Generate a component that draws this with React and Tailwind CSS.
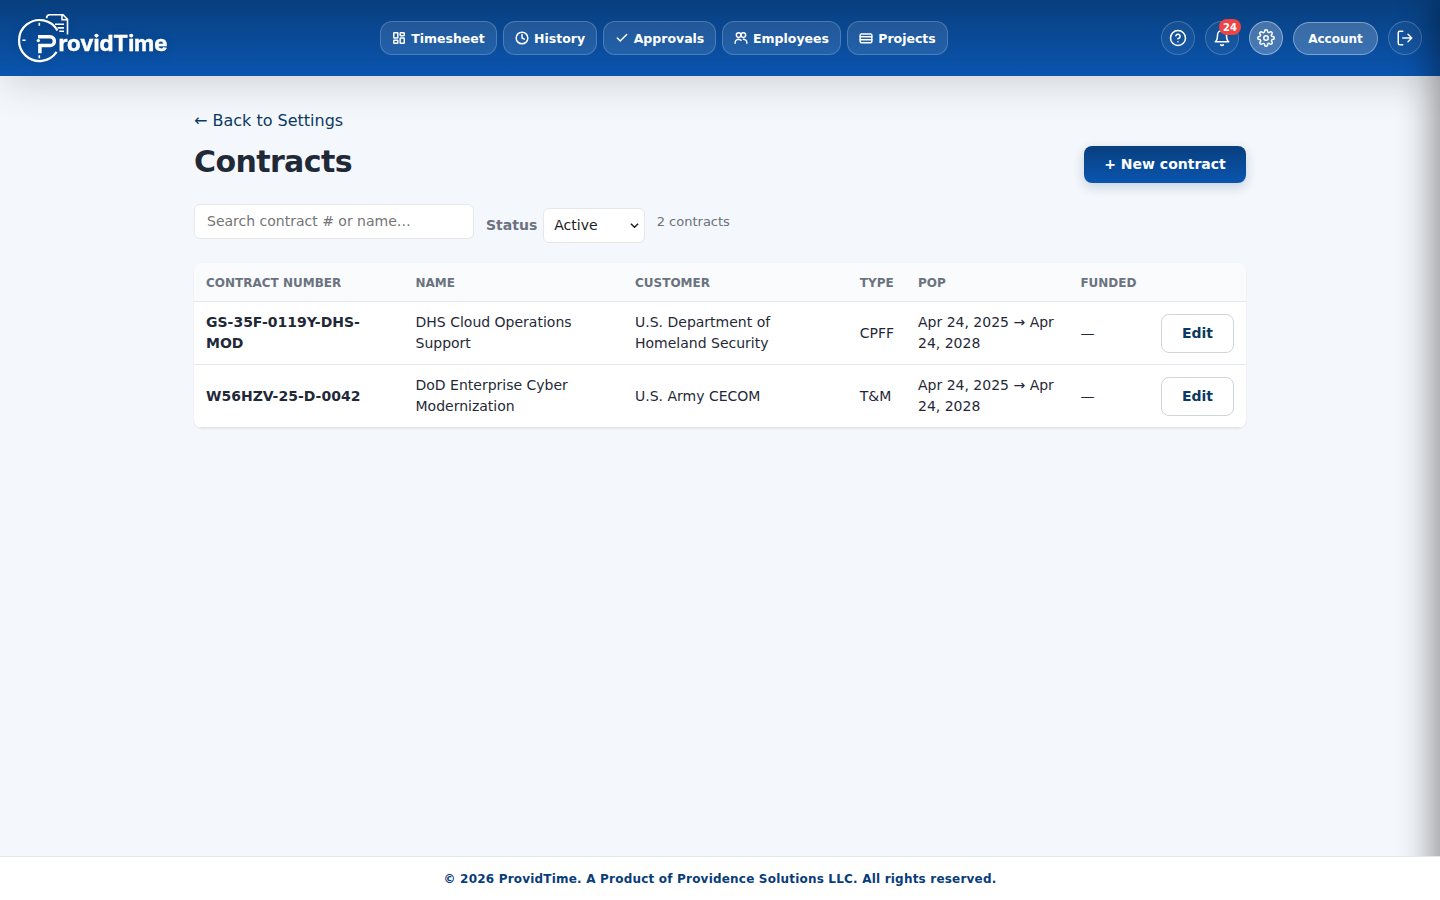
import React from "react";

const stroke = {
  fill: "none",
  stroke: "currentColor",
  strokeLinecap: "round",
  strokeLinejoin: "round",
  viewBox: "0 0 24 24",
};

const icons = {
  grid: (
    <>
      <rect x="3" y="3" width="7" height="9" rx="1" />
      <rect x="14" y="3" width="7" height="5" rx="1" />
      <rect x="14" y="12" width="7" height="9" rx="1" />
      <rect x="3" y="16" width="7" height="5" rx="1" />
    </>
  ),
  clock: (
    <>
      <circle cx="12" cy="12" r="10" />
      <path d="M12 6v6l4 2" />
    </>
  ),
  check: <path d="M20 6 9 17l-5-5" />,
  users: (
    <>
      <circle cx="8" cy="7" r="4" />
      <circle cx="16" cy="7" r="4" />
      <path d="M2 21v-1a6 6 0 0 1 6-6 6 6 0 0 1 4 2M16 14a6 6 0 0 1 6 6v1" />
    </>
  ),
  card: (
    <>
      <rect x="2" y="5" width="20" height="15" rx="2" />
      <path d="M2 10h20M2 15h20" />
    </>
  ),
  help: (
    <>
      <circle cx="12" cy="12" r="10" />
      <path d="M9.09 9a3 3 0 0 1 5.83 1c0 2-3 3-3 3M12 17h.01" />
    </>
  ),
  bell: <path d="M18 8A6 6 0 0 0 6 8c0 7-3 9-3 9h18s-3-2-3-9M13.73 21a2 2 0 0 1-3.46 0" />,
  gear: (
    <>
      <circle cx="12" cy="12" r="3" />
      <path d="M19.4 15a1.65 1.65 0 0 0 .33 1.82l.06.06a2 2 0 1 1-2.83 2.83l-.06-.06a1.65 1.65 0 0 0-2.8 1.18V21a2 2 0 0 1-4 0v-.09A1.65 1.65 0 0 0 9 19.4a1.65 1.65 0 0 0-1.82.33l-.06.06a2 2 0 1 1-2.83-2.83l.06-.06A1.65 1.65 0 0 0 3.09 14H3a2 2 0 0 1 0-4h.09A1.65 1.65 0 0 0 4.6 9a1.65 1.65 0 0 0-.33-1.82l-.06-.06a2 2 0 1 1 2.83-2.83l.06.06A1.65 1.65 0 0 0 10 3.09V3a2 2 0 0 1 4 0v.09a1.65 1.65 0 0 0 2.82 1.18l.06-.06a2 2 0 1 1 2.83 2.83l-.06.06A1.65 1.65 0 0 0 20.91 10H21a2 2 0 0 1 0 4h-.09a1.65 1.65 0 0 0-1.51 1z" />
    </>
  ),
  logout: <path d="M9 21H5a2 2 0 0 1-2-2V5a2 2 0 0 1 2-2h4M16 17l5-5-5-5M21 12H9" />,
};

function Icon({ name, className, weight = 2 }) {
  return (
    <svg {...stroke} strokeWidth={weight} className={className}>
      {icons[name]}
    </svg>
  );
}

const nav = [
  ["grid", "Timesheet", "w-[117px]"],
  ["clock", "History", "w-[94px]"],
  ["check", "Approvals", "w-[113px]"],
  ["users", "Employees", "w-[119px]"],
  ["card", "Projects", "w-[101px]"],
];

const contracts = [
  ["GS-35F-0119Y-DHS-MOD", "DHS Cloud Operations Support", "U.S. Department of Homeland Security", "CPFF"],
  ["W56HZV-25-D-0042", "DoD Enterprise Cyber Modernization", "U.S. Army CECOM", "T&M"],
];

function Logo() {
  return (
    <svg width="152" height="52" viewBox="0 0 152 52" fill="none" stroke="white" className="drop-shadow-[0_2px_4px_rgba(0,0,0,0.15)]">
      <path d="M40.4 18.5A20.5 20.5 0 1 0 39.6 39.9" strokeWidth="2.2" />
      <path d="M22.3 10.7v3M22.3 43.2v3M5.3 28.3h3.3" strokeWidth="1.6" />
      <path d="M29.6 6.2q0-3.4 3-3.4h13.4l4.5 4.6v15.2M45 3v4.8h5M38 12.3h9M40.5 15.9h6.5M42.3 19.3H47" strokeWidth="1.6" />
      <path d="M21 24.8h12a4.3 4.3 0 0 1 0 8.7H22.9v7.8" strokeWidth="3.5" />
      <circle cx="21.3" cy="28.6" r="1.7" fill="white" stroke="none" />
      <text x="41.5" y="39" textLength="109" lengthAdjust="spacingAndGlyphs" strokeWidth="0.4" className="fill-white font-['Inter',sans-serif] text-[21.3px] font-bold">rovidTime</text>
    </svg>
  );
}

export default function App() {
  const round = "flex size-[34px] items-center justify-center rounded-full border";
  return (
    <div className="relative flex h-[900px] flex-col overflow-hidden bg-[#f4f7fb] font-['DejaVu_Sans',sans-serif] text-[#1f2937]">
      <header className="relative flex h-[76px] shrink-0 items-center bg-linear-to-b from-[#083f7e] to-[#0a55b0] pl-[17px] pr-[18px] text-white shadow-[0_10px_40px_-4px_rgba(0,0,0,0.16)]">
        <div className="w-[363px]"><Logo /></div>
        <nav className="flex gap-1.5">
          {nav.map(([icon, label, width]) => (
            <a key={label} className={`flex h-[34px] items-center justify-center gap-[5px] rounded-xl border border-white/20 bg-white/10 text-[12.5px] font-bold ${width}`}>
              <Icon name={icon} weight={2.5} className="size-3.5 shrink-0" />
              <span className="pt-0.5">{label}</span>
            </a>
          ))}
        </nav>
        <div className="ml-auto flex items-center gap-2.5">
          <a className={`${round} border-white/20 bg-white/5`}><Icon name="help" className="size-[18px]" /></a>
          <a className={`${round} relative border-white/20 bg-white/5`}>
            <Icon name="bell" className="size-[18px]" />
            <span className="absolute -right-[3px] -top-[3px] flex h-4 w-[22px] items-center justify-center rounded-full bg-[#ef4444] text-[10px] font-bold">24</span>
          </a>
          <a className={`${round} border-white/40 bg-white/25`}><Icon name="gear" className="size-[18px]" /></a>
          <a className="flex h-[33px] w-[85px] items-center justify-center rounded-full border border-white/35 bg-white/20 pt-px text-[12px] font-bold">Account</a>
          <a className={`${round} border-white/20 bg-white/5`}><Icon name="logout" className="size-[18px]" /></a>
        </div>
      </header>

      <main className="mx-auto w-[1052px] flex-1 pt-[33px]">
        <a className="block text-[16px] leading-6 text-[#0b3a63]">← Back to Settings</a>
        <div className="mt-[13px] flex items-start justify-between">
          <h1 className="-mt-[3px] text-[30px] font-bold leading-[38px] tracking-[-0.6px]">Contracts</h1>
          <button className="h-[37px] w-[162px] rounded-lg bg-linear-to-b from-[#083f7e] to-[#0a55b0] text-[14px] font-bold text-white shadow-[0_4px_12px_rgba(10,61,122,0.2)]">+ New contract</button>
        </div>
        <div className="mt-[21px] flex items-start">
          <input placeholder="Search contract # or name…" className="h-[35px] w-[280px] rounded-md border border-[#e5e7eb] bg-white px-3 pb-0.5 text-[14px] placeholder:text-[#757575]" />
          <label className="ml-3 mt-1 flex items-center gap-1.5 text-[14px] font-bold text-[#6b7280]">
            Status
            <span className="flex h-[35px] w-[102px] items-center justify-between rounded-md border border-[#e5e7eb] bg-white pl-2.5 pr-[5px] font-normal text-[#1a1d24]">
              Active
              <svg viewBox="0 0 10 10" className="size-[9px]" fill="none" stroke="currentColor" strokeWidth="1.6"><path d="m1 3 4 4 4-4" /></svg>
            </span>
          </label>
          <span className="ml-[11.5px] mt-2 text-[13px] leading-5 text-[#6b7280]">2 contracts</span>
        </div>
        <div className="mt-5 overflow-hidden rounded-lg bg-white shadow-[0_1px_2px_rgba(0,0,0,0.08)]">
          <table className="w-full table-fixed border-separate border-spacing-0 text-left text-[14px] leading-[21px]">
            <colgroup>
              <col className="w-[209.5px]" /><col className="w-[219.5px]" /><col className="w-[224.8px]" /><col className="w-[58.2px]" /><col className="w-[162.4px]" /><col className="w-[80.6px]" /><col className="w-[97px]" />
            </colgroup>
            <thead className="bg-[#f9fbfc]">
              <tr className="text-[12px] text-[#6b7280]">
                {["CONTRACT NUMBER", "NAME", "CUSTOMER", "TYPE", "POP", "FUNDED", ""].map((h) => (
                  <th key={h} className="h-[39px] whitespace-nowrap border-b border-[#e5e7eb] px-3 pb-0 pt-0.5 font-bold">{h}</th>
                ))}
              </tr>
            </thead>
            <tbody className="[&_td]:h-[63px] [&_td]:border-b [&_td]:border-[#e5e7eb]">
              {contracts.map(([number, name, customer, type]) => (
                <tr key={number}>
                  <td className="px-3 font-bold">{number}</td>
                  <td className="pl-3 pr-10">{name}</td>
                  <td className="pl-3 pr-10">{customer}</td>
                  <td className="px-3">{type}</td>
                  <td className="px-3">Apr 24, 2025 → Apr 24, 2028</td>
                  <td className="px-3">—</td>
                  <td className="px-3"><button className="block h-[39px] w-[73px] rounded-lg border border-[#d1d5db] bg-white text-[14px] font-bold text-[#0b3a63]">Edit</button></td>
                </tr>
              ))}
            </tbody>
          </table>
        </div>
      </main>

      <div className="pointer-events-none absolute bottom-0 left-full top-0 w-80 shadow-[-8px_0_32px_rgba(0,0,0,0.4)]" />
      <footer className="relative flex h-11 shrink-0 items-center justify-center border-t border-[#e5e7eb] bg-white text-[12px] font-bold tracking-[0.2px] text-[#083d7a]">
        © 2026 ProvidTime. A Product of Providence Solutions LLC. All rights reserved.
      </footer>
    </div>
  );
}
